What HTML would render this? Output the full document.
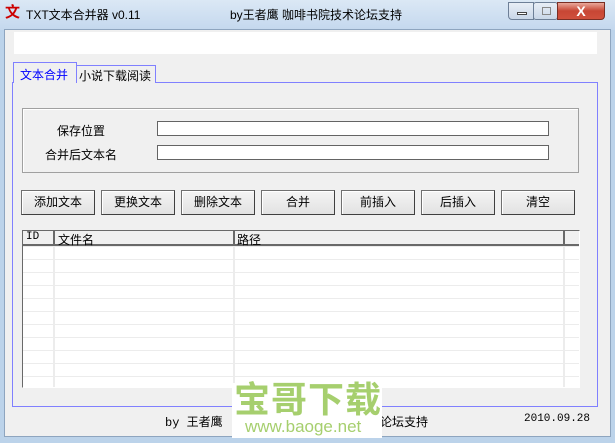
<!DOCTYPE html>
<html><head><meta charset="utf-8"><style>
*{margin:0;padding:0;box-sizing:border-box}
body{width:615px;height:443px;overflow:hidden;background:#bcd3ea;font-family:"Liberation Sans","Noto Sans CJK SC","WenQuanYi Zen Hei",sans-serif;font-size:12px;position:relative;color:#000}
.a{position:absolute}
.title{left:0;top:0;width:615px;height:30px;background:linear-gradient(#dbe8f5,#c4d8ee)}
.client{left:4px;top:29px;width:607px;height:408px;background:#f0f0f0;border:1px solid #8ea5bf}
.btn{position:absolute;top:190px;height:25px;width:74px;background:linear-gradient(#f4f4f4,#e2e2e2);border:1px solid #707070;border-right-color:#404040;border-bottom-color:#404040;box-shadow:inset 1px 1px #fff;text-align:center;line-height:23px;font-size:12px}
.inp{position:absolute;left:157px;width:392px;height:15px;background:#fff;border:1px solid #646464}
.wb{position:absolute;top:2px;height:18px;border:1px solid #6d7f97;border-radius:3px;background:linear-gradient(#e8eef6,#c9d7e8)}
</style></head><body>
<div class="a title"></div>
<div class="a" style="left:5px;top:5px;color:#c00;font-weight:bold;font-size:15px;line-height:16px">文</div>
<div class="a" style="left:26px;top:6px;font-size:12px">TXT文本合并器 v0.11</div>
<div class="a" style="left:230px;top:6px;font-size:12px">by王者鹰 咖啡书院技术论坛支持</div>
<div class="wb" style="left:508px;width:26px;border-radius:0 0 0 4px"><div class="a" style="left:8px;top:9px;width:10px;height:3px;border:1px solid #444;background:#fff"></div></div>
<div class="wb" style="left:533px;width:25px"><div class="a" style="left:8px;top:4px;width:9px;height:8px;border:1px solid #888"></div></div>
<div class="wb" style="left:557px;width:48px;background:linear-gradient(#e9a89b,#c74634 50%,#d0503c);border-color:#7a2e24;border-radius:0 0 4px 0;color:#fff;text-align:center;font-weight:bold;font-size:14px;line-height:16px">X</div>
<div class="a client"></div>
<div class="a" style="left:14px;top:32px;width:583px;height:22px;background:#fff"></div>
<div class="a" style="left:12px;top:82px;width:586px;height:325px;border:1px solid #8080ff;background:#f0f0f0"></div>
<div class="a" style="left:13px;top:62px;width:64px;height:21px;border:1px solid #8080ff;border-bottom:none;background:#f0f0f0;color:#00f;padding:3px 0 0 6px">文本合并</div>
<div class="a" style="left:76px;top:65px;width:80px;height:18px;border:1px solid #8080ff;border-bottom:none;background:#f0f0f0;padding:1px 0 0 2px">小说下载阅读</div>
<div class="a" style="left:22px;top:108px;width:557px;height:65px;border:1px solid #a0a0a0;box-shadow:inset 1px 1px #fff"></div>
<div class="a" style="left:57px;top:122px">保存位置</div>
<div class="a" style="left:45px;top:146px">合并后文本名</div>
<div class="inp" style="top:121px"></div>
<div class="inp" style="top:145px"></div>
<div class="btn" style="left:21px">添加文本</div>
<div class="btn" style="left:101px">更换文本</div>
<div class="btn" style="left:181px">删除文本</div>
<div class="btn" style="left:261px">合并</div>
<div class="btn" style="left:341px">前插入</div>
<div class="btn" style="left:421px">后插入</div>
<div class="btn" style="left:501px">清空</div>
<div class="a" style="left:22px;top:230px;width:558px;height:158px;border:1px solid #696969;border-right-color:#fff;border-bottom-color:#fff;background:#fff;overflow:hidden;
background-image:linear-gradient(#fff 12px,#ececec 12px);background-size:100% 13px;background-position:0 3px">
<div class="a" style="left:0;top:0;width:556px;height:15px;background:#f0f0f0;border-bottom:2px solid #696969"></div>
<div class="a" style="left:3px;top:0;font-size:11px;font-family:'Liberation Mono',monospace">ID</div>
<div class="a" style="left:35px;top:0">文件名</div>
<div class="a" style="left:214px;top:0">路径</div>
<div class="a" style="left:30px;top:0;width:2px;height:160px;background:linear-gradient(#696969 15px,#ececec 15px)"></div>
<div class="a" style="left:210px;top:0;width:2px;height:160px;background:linear-gradient(#696969 15px,#ececec 15px)"></div>
<div class="a" style="left:540px;top:0;width:2px;height:160px;background:linear-gradient(#696969 15px,#ececec 15px)"></div>
</div>
<div class="a" style="left:165px;top:413px;font-family:'Liberation Mono','Noto Sans CJK SC',monospace;font-size:12px">by 王者鹰</div>
<div class="a" style="left:380px;top:413px">论坛支持</div>
<div class="a" style="left:524px;top:413px;font-family:'Liberation Mono',monospace;font-size:11px">2010.09.28</div>
<div class="a" style="left:232px;top:383px;width:150px;height:55px;background:#fff"></div>
<div class="a" style="left:234px;top:379px;color:#a6cf6e;font-size:36px;font-weight:bold;letter-spacing:1px;line-height:42px">宝哥下载</div>
<div class="a" style="left:245px;top:417px;color:#a6cf6e;font-size:17px">www.baoge.net</div>
</body></html>
